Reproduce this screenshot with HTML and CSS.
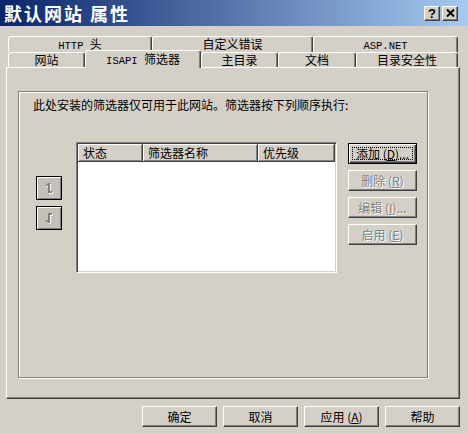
FILE: index.html
```html
<!DOCTYPE html>
<html lang="zh-CN">
<head>
  <meta charset="UTF-8">
  <title>默认网站 属性</title>
  <link rel="stylesheet" href="styles.css">
</head>
<body>
<div class="dlg">
  <div class="titlebar">
    <span class="title">默认网站 属性</span>
    <div class="caps">
      <span class="cap q">?</span>
      <span class="cap">
        <svg width="9" height="8" viewBox="0 0 9 8"><path d="M1 0.5 L8 7.5 M8 0.5 L1 7.5" stroke="#000" stroke-width="2"/></svg>
      </span>
    </div>
  </div>

  <div class="tabs">
    <div class="tabrow back">
      <div class="tab w144"><span class="lat">HTTP </span>头</div>
      <div class="tab w161">自定义错误</div>
      <div class="tab w145"><span class="lat">ASP.NET</span></div>
    </div>
    <div class="tabrow front">
      <div class="tab w77">网站</div>
      <div class="tab w116 on"><span class="lat">ISAPI </span>筛选器</div>
      <div class="tab w77">主目录</div>
      <div class="tab w78">文档</div>
      <div class="tab w102">目录安全性</div>
    </div>
  </div>

  <div class="panel">
    <div class="group">
      <p class="note">此处安装的筛选器仅可用于此网站。筛选器按下列顺序执行:</p>
      <div class="lv-row">
        <div class="arrows">
          <span class="arrow">
            <svg width="8" height="12" viewBox="0 0 8 12">
              <path d="M3 1 H5 V9 H7 V11 H3 Z M3 1 L0 4 H2 L3 3 Z" fill="#fff" transform="translate(1 1)"/>
              <path d="M3 1 H5 V9 H7 V11 H3 Z M3 1 L0 4 H2 L3 3 Z" fill="#808080"/>
            </svg>
          </span>
          <span class="arrow">
            <svg width="8" height="12" viewBox="0 0 8 12">
              <path d="M3 1 H7 V3 H5 V11 H3 Z M3 11 L0 8 H2 L3 9 Z" fill="#fff" transform="translate(1 1)"/>
              <path d="M3 1 H7 V3 H5 V11 H3 Z M3 11 L0 8 H2 L3 9 Z" fill="#808080"/>
            </svg>
          </span>
        </div>
        <div class="lv">
          <div class="lv-head">
            <span class="col c1">状态</span>
            <span class="col c2">筛选器名称</span>
            <span class="col c3">优先级</span>
          </div>
        </div>
        <div class="side">
          <button class="btn def"><span class="focus">添加 (<u>D</u>)...</span></button>
          <button class="btn off">删除 (<u>R</u>)</button>
          <button class="btn off">编辑 (<u>I</u>)...</button>
          <button class="btn off">启用 (<u>E</u>)</button>
        </div>
      </div>
    </div>
  </div>

  <div class="footer">
    <button class="btn wide">确定</button>
    <button class="btn wide">取消</button>
    <button class="btn wide">应用 (<u>A</u>)</button>
    <button class="btn wide">帮助</button>
  </div>
</div>
</body>
</html>
```

FILE: styles.css
```css
* { box-sizing: border-box; }
body { margin: 0; background: #d4d0c8; font-family: "Noto Sans CJK SC", sans-serif; font-size: 12px; color: #000; }
.dlg { width: 468px; height: 433px; overflow: hidden; }

.titlebar { height: 26px; display: flex; align-items: center; justify-content: space-between; padding: 0 10px 0 4px; background: linear-gradient(to right, #0a246a, #a6caf0); }
.title { color: #fff; font-weight: bold; font-size: 18px; letter-spacing: 2px; line-height: 26px; white-space: pre; }
.caps { display: flex; gap: 2px; }
.cap { width: 16px; height: 15px; display: flex; align-items: center; justify-content: center; background: #d4d0c8; border: 1px solid; border-color: #fff #404040 #404040 #fff; box-shadow: inset -1px -1px #808080; }
.cap.q { font-family: "Liberation Sans", sans-serif; font-weight: bold; font-size: 13px; line-height: 13px; }

.tabs { margin: 10px 0 0 8px; width: 450px; }
.tabrow { display: flex; }
.tabrow.back { height: 16px; }
.tabrow.front { height: 15px; }
.tab { height: 16px; border: 1px solid; border-bottom: 0; border-color: #fff #404040 #404040 #fff; border-radius: 3px 3px 0 0; box-shadow: inset -1px 0 #808080; text-align: center; line-height: 14px; background: #d4d0c8; white-space: pre; }
.front .tab { height: 15px; }
.front .tab.on { height: 18px; margin-top: -2px; position: relative; z-index: 1; line-height: 15px; }
.lat { font-family: "Liberation Mono", monospace; font-size: 10.5px; }
.w77 { width: 77px; }
.w78 { width: 78px; }
.w102 { width: 102px; }
.w116 { width: 116px; }
.w144 { width: 144px; }
.w145 { width: 145px; }
.w161 { width: 161px; }

.panel { margin-left: 6px; width: 454px; height: 332px; border: 1px solid; border-color: #fff #404040 #404040 #fff; box-shadow: inset -1px -1px #808080; padding: 23px 0 0 11px; }
.group { width: 410px; height: 287px; border: 1px solid #808080; box-shadow: inset 1px 1px #fff, 1px 1px #fff; padding-left: 14px; }
.note { margin: 6px 0 0; line-height: 14px; }

.lv-row { display: flex; margin-top: 30px; }
.arrows { display: flex; flex-direction: column; gap: 6px; margin: 34px 0 0 3px; }
.arrow { width: 26px; height: 24px; display: flex; align-items: center; justify-content: center; background: #c4c0b8; border: 1px solid #000; box-shadow: inset 1px 1px #fff, inset -1px -1px #808080; }

.lv { width: 261px; height: 131px; margin-left: 14px; background: #fff; border: 1px solid; border-color: #808080 #fff #fff #808080; box-shadow: inset 1px 1px #404040, inset -1px -1px #d4d0c8; padding: 1px; }
.lv-head { display: flex; height: 18px; background: #d4d0c8; }
.col { height: 18px; line-height: 17px; padding-left: 5px; border-right: 1px solid #404040; border-bottom: 1px solid #404040; box-shadow: inset 1px 1px #fff, inset -1px -1px #808080; }
.c1 { width: 65px; }
.c2 { width: 115px; }
.c3 { width: 77px; }

.side { display: flex; flex-direction: column; gap: 6px; margin: 1px 0 0 11px; }
.btn { width: 69px; height: 21px; padding: 0; font: inherit; line-height: 14px; color: #000; background: #d4d0c8; border: 1px solid; border-color: #fff #404040 #404040 #fff; box-shadow: inset -1px -1px #808080; display: flex; align-items: center; justify-content: center; white-space: pre; }
.btn u { text-underline-offset: 1px; }
.btn.def { border-color: #000; box-shadow: inset 1px 1px #fff, inset -1px -1px #404040, inset -2px -2px #808080; padding: 3px; }
.focus { flex: 1; align-self: stretch; display: flex; align-items: center; justify-content: center; border: 1px dotted #000; white-space: pre; }
.btn.off { color: #808080; text-shadow: 1px 1px #fff; }

.footer { display: flex; justify-content: flex-end; gap: 6px; padding-right: 8px; margin-top: 7px; }
.btn.wide { width: 75px; }
```
